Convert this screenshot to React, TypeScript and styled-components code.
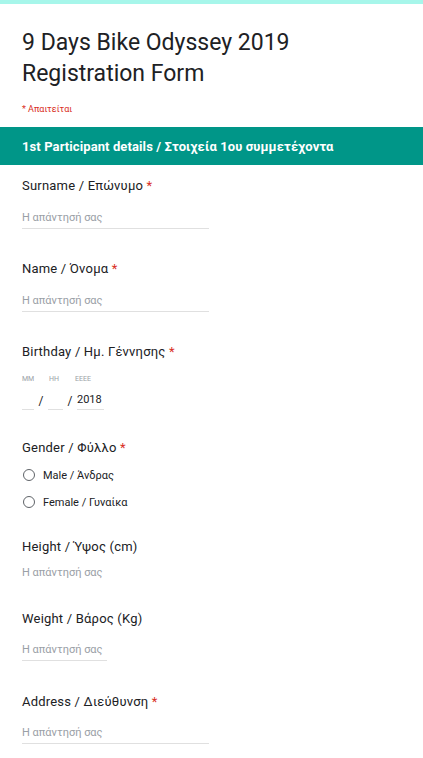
import styled, {createGlobalStyle} from "styled-components";

const GlobalStyle = createGlobalStyle`
  body {
    margin: 0;
    background: #fff;
    font-family: Roboto, "Liberation Sans", Arial, sans-serif;
    color: #202124;
  }
`;

const Page = styled.div`
  width: 423px;
  border-top: 4px solid #a7f6ea;
`;

const Intro = styled.div`
  padding: 23px 22px 12px;
`;

const Title = styled.h1`
  margin: 0;
  font-size: 23px;
  font-weight: 400;
  line-height: 31px;
  color: #202124;
`;

const RequiredNote = styled.div`
  margin-top: 14px;
  font-size: 9px;
  line-height: 12px;
  color: #d93025;
`;

const SectionHeader = styled.div`
  background: #009688;
  color: #fff;
  font-size: 13px;
  font-weight: 700;
  letter-spacing: 0.1px;
  height: 38px;
  display: flex;
  align-items: center;
  padding: 0 22px;
`;

const Body = styled.div`
  padding: 11px 22px 0;
`;

const Question = styled.div<{ $space: number }>`
  display: flex;
  flex-direction: column;
  padding-bottom: ${(p) => p.$space}px;
`;

const Label = styled.div`
  font-size: 13px;
  line-height: 20px;
  letter-spacing: 0.2px;
  color: #202124;
`;

const Star = styled.span`
  color: #d93025;
`;

const TextInput = styled.div<{ $width: number; $gap: number; $line: boolean }>`
  width: ${(p) => p.$width}px;
  margin-top: ${(p) => p.$gap}px;
  height: 20px;
  line-height: 20px;
  font-size: 11px;
  color: #9aa0a6;
  border-bottom: 1px solid ${(p) => (p.$line ? "#e0e0e0" : "transparent")};
`;

const DateLabels = styled.div`
  display: flex;
  margin-top: 12px;
  font-size: 7px;
  line-height: 10px;
  color: #9aa0a6;
`;

const DateLabel = styled.span<{ $width: number }>`
  width: ${(p) => p.$width}px;
`;

const DateRow = styled.div`
  display: flex;
  align-items: center;
  margin-top: 7px;
  font-size: 11px;
  color: #202124;
`;

const DateField = styled.span<{ $width: number }>`
  width: ${(p) => p.$width}px;
  height: 18px;
  line-height: 18px;
  border-bottom: 1px solid #e0e0e0;
`;

const Slash = styled.span`
  width: 14px;
  text-align: center;
  font-size: 12px;
`;

const Options = styled.div`
  display: flex;
  flex-direction: column;
  gap: 7px;
  margin-top: 7px;
`;

const Option = styled.label`
  display: flex;
  align-items: center;
  gap: 8px;
  height: 20px;
  font-size: 11px;
  color: #202124;
`;

const Radio = styled.span`
  width: 10px;
  height: 10px;
  border: 1.5px solid #5f6368;
  border-radius: 50%;
  margin-left: 1px;
`;

export default function App() {
  return (
    <Page>
      <GlobalStyle />
      <Intro>
        <Title>
          9 Days Bike Odyssey 2019
          <br />
          Registration Form
        </Title>
        <RequiredNote>* Απαιτείται</RequiredNote>
      </Intro>
      <SectionHeader>1st Participant details / Στοιχεία 1ου συμμετέχοντα</SectionHeader>
      <Body>
        <Question $space={30}>
          <Label>Surname / Επώνυμο <Star>*</Star></Label>
          <TextInput $width={187} $gap={12} $line>Η απάντησή σας</TextInput>
        </Question>
        <Question $space={30}>
          <Label>Name / Όνομα <Star>*</Star></Label>
          <TextInput $width={187} $gap={12} $line>Η απάντησή σας</TextInput>
        </Question>
        <Question $space={28}>
          <Label>Birthday / Ημ. Γέννησης <Star>*</Star></Label>
          <DateLabels>
            <DateLabel $width={27}>MM</DateLabel>
            <DateLabel $width={26}>HH</DateLabel>
            <DateLabel $width={30}>ΕΕΕΕ</DateLabel>
          </DateLabels>
          <DateRow>
            <DateField $width={12} />
            <Slash>/</Slash>
            <DateField $width={15} />
            <Slash>/</Slash>
            <DateField $width={27}>2018</DateField>
          </DateRow>
        </Question>
        <Question $space={25}>
          <Label>Gender / Φύλλο <Star>*</Star></Label>
          <Options>
            <Option><Radio />Male / Άνδρας</Option>
            <Option><Radio />Female / Γυναίκα</Option>
          </Options>
        </Question>
        <Question $space={25}>
          <Label>Height / Ύψος (cm)</Label>
          <TextInput $width={187} $gap={6} $line={false}>Η απάντησή σας</TextInput>
        </Question>
        <Question $space={31}>
          <Label>Weight / Βάρος (Kg)</Label>
          <TextInput $width={85} $gap={11} $line>Η απάντησή σας</TextInput>
        </Question>
        <Question $space={20}>
          <Label>Address / Διεύθυνση <Star>*</Star></Label>
          <TextInput $width={187} $gap={11} $line>Η απάντησή σας</TextInput>
        </Question>
      </Body>
    </Page>
  );
}
